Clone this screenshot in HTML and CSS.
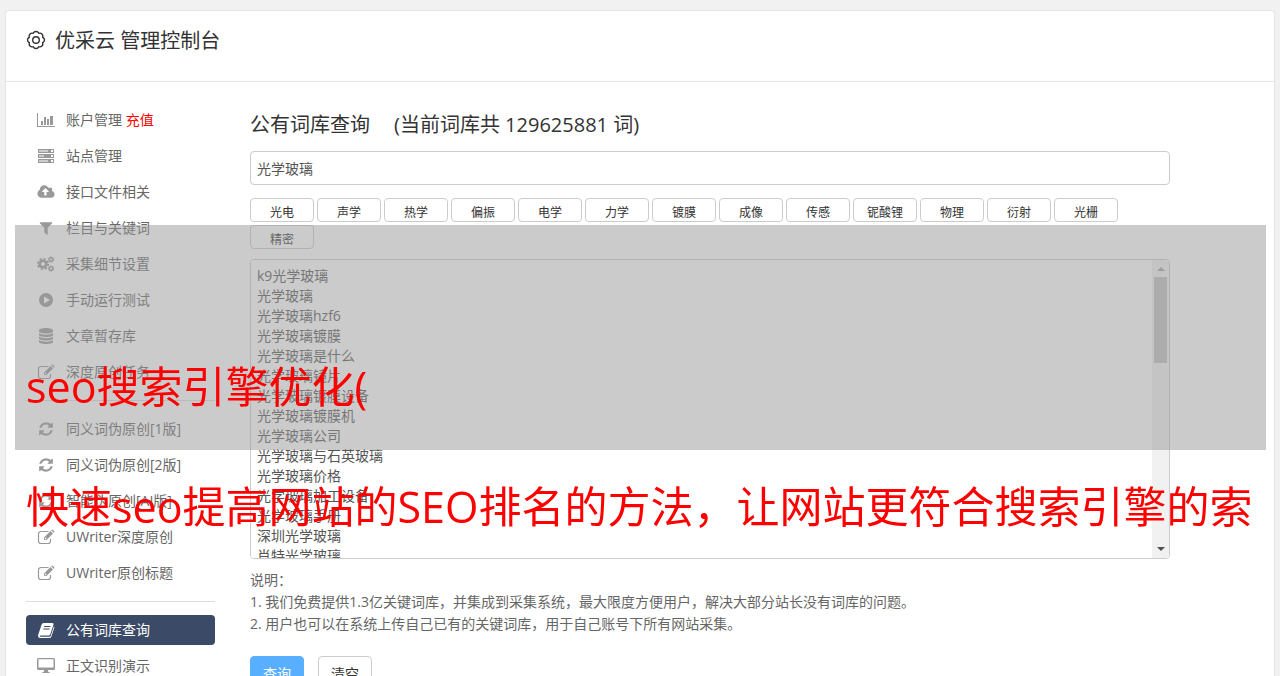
FILE: index.html
```html
<!DOCTYPE html>
<html lang="zh-CN">
<head>
  <meta charset="UTF-8" />
  <meta name="viewport" content="width=device-width,initial-scale=1" />
  <title>优采云 管理控制台</title>
  <link rel="stylesheet" href="styles.css">
</head>
<body>

  <!-- shared icon shapes -->
  <svg class="sprite" aria-hidden="true">
    <symbol id="i-chart" viewBox="0 0 18 16">
      <path d="M0 1h1v13h17v1H0zM4 9h2v4H4zM7 5h2v8H7zM10 7h2v6h-2zM13 4h3v9h-3z"/>
    </symbol>
    <symbol id="i-server" viewBox="0 0 18 16">
      <path fill-rule="evenodd" d="M1 1h16v4H1zM2 2.500v1h9v-1zM14 2v2h2V2zM1 6h16v4H1zM2 7.500v1h5v-1zM14 7v2h2V7zM1 11h16v4H1zM2 12.500v1h9v-1zM14 12v2h2v-2z"/>
    </symbol>
    <symbol id="i-cloud" viewBox="0 0 1920 1792">
      <path fill-rule="evenodd" d="M1920 1152q0 159-112 272t-272 112H448q-185 0-316-132T0 1088q0-130 70-240t188-165q-2-30-2-43 0-212 150-362t362-150q156 0 286 87t188 231q71-62 166-62 106 0 181 75t75 181q0 76-41 138 130 31 214 136t83 238zM1280 864q0-14-9-23L919 489q-9-9-23-9t-23 9L522 840q-10 12-10 24 0 14 9 23t23 9h224v352q0 13 10 22t22 10h192q13 0 22-10t10-22V896h224q13 0 22-10t10-22z"/>
    </symbol>
    <symbol id="i-filter" viewBox="0 0 1792 1792">
      <path d="M1595 295q17 41-14 70l-493 493v742q0 42-39 59-13 5-25 5-27 0-45-19l-256-256q-19-19-19-45V858L211 365q-31-29-14-70 17-39 59-39h1280q42 0 59 39z"/>
    </symbol>
    <symbol id="i-cogs" viewBox="0 0 18 16">
      <circle cx="6" cy="8" r="3.300" fill="none" stroke="currentColor" stroke-width="2.600"/>
      <circle cx="6" cy="8" r="5.200" fill="none" stroke="currentColor" stroke-width="1.800" stroke-dasharray="2.042"/>
      <circle cx="14" cy="3.500" r="1.800" fill="none" stroke="currentColor" stroke-width="1.400"/>
      <circle cx="14" cy="3.500" r="2.800" fill="none" stroke="currentColor" stroke-width="1" stroke-dasharray="1.466"/>
      <circle cx="14" cy="12.500" r="1.800" fill="none" stroke="currentColor" stroke-width="1.400"/>
      <circle cx="14" cy="12.500" r="2.800" fill="none" stroke="currentColor" stroke-width="1" stroke-dasharray="1.466"/>
    </symbol>
    <symbol id="i-play" viewBox="0 0 16 16">
      <path fill-rule="evenodd" d="M8 1a7 7 0 1 1 0 14A7 7 0 0 1 8 1zM6 4.500v7l6-3.500z"/>
    </symbol>
    <symbol id="i-database" viewBox="0 0 16 16">
      <path d="M8 0c4 0 7 1 7 2.300v1C15 4.600 12 5.600 8 5.600S1 4.600 1 3.300v-1C1 1 4 0 8 0zM1 5c1.500 1.200 4 1.700 7 1.700S13.500 6.200 15 5v1.800c0 1.300-3 2.300-7 2.300S1 8.100 1 6.800zM1 8.500c1.500 1.200 4 1.700 7 1.700s5.500-.5 7-1.700v1.800c0 1.300-3 2.300-7 2.300s-7-1-7-2.300zM1 12c1.500 1.200 4 1.700 7 1.700s5.500-.5 7-1.700v1.700C15 15 12 16 8 16s-7-1-7-2.300z"/>
    </symbol>
    <symbol id="i-edit" viewBox="0 0 18 16">
      <path d="M11.500 2.500H4A2.500 2.500 0 0 0 1.500 5v7A2.500 2.500 0 0 0 4 14.500h7a2.500 2.500 0 0 0 2.500-2.500v-2" fill="none" stroke="currentColor" stroke-width="1.200"/>
      <path fill-rule="evenodd" d="M13.500 2 16 4.500 9.500 11H7V8.500zM7.800 9v1.200H9l.6-.6-1.200-1.200zM14.200 1.300l.6-.6q.5-.4 1 0l1.500 1.500q.4.500 0 1l-.6.600z"/>
    </symbol>
    <symbol id="i-refresh" viewBox="0 0 1536 1792">
      <path d="M1511 1056q0 5-1 7-64 268-268 434t-478 167q-146 0-282-55t-243-157l-129 129q-19 19-45 19t-45-19-19-45v-448q0-26 19-45t45-19h448q26 0 45 19t19 45-19 45l-137 137q71 66 161 102t187 36q134 0 250-65t186-179q11-17 53-117 8-23 30-23h192q13 0 22 10t9 22zM1536 256v448q0 26-19 45t-45 19h-448q-26 0-45-19t-19-45 19-45l138-138q-148-137-349-137-134 0-250 65T332 628q-11 17-53 117-8 23-30 23H50q-13 0-22-10t-10-22v-7q65-268 270-434t480-167q146 0 284 56t245 156l130-129q19-19 45-19t45 19 19 45z"/>
    </symbol>
    <symbol id="i-book" viewBox="0 0 18 16">
      <path fill-rule="evenodd" d="M6.500 1h9q1.400.1 1 1.600l-3.200 9.600q-.4 1.300-1.800 1.300H3.300q-.9 0-.7.600.3.600 1.200.6h8.700q.9 0 1.200-.8l3.200-9.600q.7.500.4 1.500l-3 9q-.5 1.200-1.800 1.200H3.400Q1 16 1 13.500L4.600 2.600Q5.200 1 6.500 1zM7.300 4l-.3 1h6.300l.3-1zM6.500 6.500l-.3 1h6.200l.3-1z"/>
    </symbol>
    <symbol id="i-desktop" viewBox="0 0 18 16">
      <path fill-rule="evenodd" d="M1.500 0h15Q18 0 18 1.500v9q0 1.500-1.500 1.500H11v1.500q2 .5 2 1.500H5q0-1 2-1.500V12H1.500Q0 12 0 10.500v-9Q0 0 1.500 0zM1.500 1.200v8.300h15V1.200z"/>
    </symbol>
    <symbol id="i-gear" viewBox="0 0 20 20">
      <path d="M16.650 12.760A3 3 0 0 1 12.760 16.650 3 3 0 0 1 7.240 16.650 3 3 0 0 1 3.350 12.760 3 3 0 0 1 3.350 7.240 3 3 0 0 1 7.240 3.350 3 3 0 0 1 12.760 3.350 3 3 0 0 1 16.650 7.240 3 3 0 0 1 16.650 12.760z" fill="none" stroke="currentColor" stroke-width="1.400" stroke-linejoin="round"/>
      <circle cx="10" cy="10" r="3.300" fill="none" stroke="currentColor" stroke-width="1.400"/>
    </symbol>
  </svg>

  <div class="panel">
    <header class="panel-header">
      <svg class="gear"><use href="#i-gear"/></svg>
      <h1>优采云 管理控制台</h1>
    </header>

    <div class="container">
      <!-- SIDE MENU -->
      <nav class="menu">
        <a href="#"><svg class="icon"><use href="#i-chart"/></svg><span>账户管理 <em>充值</em></span></a>
        <a href="#"><svg class="icon"><use href="#i-server"/></svg>站点管理</a>
        <a href="#"><svg class="icon"><use href="#i-cloud"/></svg>接口文件相关</a>
        <a href="#"><svg class="icon"><use href="#i-filter"/></svg>栏目与关键词</a>
        <a href="#"><svg class="icon"><use href="#i-cogs"/></svg>采集细节设置</a>
        <a href="#"><svg class="icon"><use href="#i-play"/></svg>手动运行测试</a>
        <a href="#"><svg class="icon"><use href="#i-database"/></svg>文章暂存库</a>
        <a href="#"><svg class="icon"><use href="#i-edit"/></svg>深度原创任务</a>
        <hr>
        <a href="#"><svg class="icon"><use href="#i-refresh"/></svg>同义词伪原创[1版]</a>
        <a href="#"><svg class="icon"><use href="#i-refresh"/></svg>同义词伪原创[2版]</a>
        <a href="#"><svg class="icon"><use href="#i-refresh"/></svg>智能伪原创[AI版]</a>
        <a href="#"><svg class="icon"><use href="#i-edit"/></svg>UWriter深度原创</a>
        <a href="#"><svg class="icon"><use href="#i-edit"/></svg>UWriter原创标题</a>
        <hr>
        <a href="#" class="active"><svg class="icon"><use href="#i-book"/></svg>公有词库查询</a>
        <a href="#"><svg class="icon"><use href="#i-desktop"/></svg>正文识别演示</a>
      </nav>

      <!-- WORD QUERY -->
      <main class="content">
        <h2><label for="word">公有词库查询</label><span>(当前词库共 129625881 词)</span></h2>
        <input type="text" id="word" class="word" value="光学玻璃">

        <div class="tags">
          <button type="button">光电</button>
          <button type="button">声学</button>
          <button type="button">热学</button>
          <button type="button">偏振</button>
          <button type="button">电学</button>
          <button type="button">力学</button>
          <button type="button">镀膜</button>
          <button type="button">成像</button>
          <button type="button">传感</button>
          <button type="button">铌酸锂</button>
          <button type="button">物理</button>
          <button type="button">衍射</button>
          <button type="button">光栅</button>
          <button type="button">精密</button>
        </div>

        <div class="words-box">
          <textarea class="words" id="words" aria-label="关键词">k9光学玻璃
光学玻璃
光学玻璃hzf6
光学玻璃镀膜
光学玻璃是什么
光学玻璃镜片
光学玻璃镀膜设备
光学玻璃镀膜机
光学玻璃公司
光学玻璃与石英玻璃
光学玻璃价格
光学玻璃加工设备
光学玻璃手册
深圳光学玻璃
肖特光学玻璃</textarea>
          <div class="scrollbar" aria-hidden="true">
            <svg class="up" viewBox="0 0 8 4"><path d="M0 4l4-4 4 4z"/></svg>
            <div class="thumb"></div>
            <svg class="down" viewBox="0 0 8 4"><path d="M0 0l4 4 4-4z"/></svg>
          </div>
        </div>

        <div class="notes">
          <p>说明：</p>
          <p>1. 我们免费提供1.3亿关键词库，并集成到采集系统，最大限度方便用户，解决大部分站长没有词库的问题。</p>
          <p>2. 用户也可以在系统上传自己已有的关键词库，用于自己账号下所有网站采集。</p>
        </div>

        <div class="actions">
          <button type="submit" class="primary">查询</button>
          <button type="reset">清空</button>
        </div>
      </main>
    </div>
  </div>

  <!-- caption over the page -->
  <div class="caption">
    <p class="band">seo搜索引擎优化(</p>
    <p>快速seo提高网站的SEO排名的方法，让网站更符合搜索引擎的索</p>
  </div>

</body>
</html>
```
FILE: styles.css
```css
* { box-sizing: border-box; }
body { margin: 0; padding: 10px 5px 0; height: 100vh; overflow: hidden; position: relative; background: #f1f1f1; color: #666; font: 14px/20px "Open Sans", "Noto Sans CJK SC", sans-serif; }
h1, h2, p { margin: 0; font-weight: normal; }
a { color: inherit; text-decoration: none; }
button, input, textarea { font: inherit; }
.sprite { display: none; }

.panel { background: #fff; border: 1px solid #e5e5e5; border-radius: 4px; min-height: 100vh; }
.panel-header { display: flex; align-items: center; gap: 9px; padding: 14px 20px 24px; border-bottom: 1px solid #e5e5e5; color: #333; }
.panel-header h1 { font-size: 20px; line-height: 32px; }
.gear { width: 20px; height: 20px; margin-bottom: 2px; }
.container { display: flex; gap: 35px; padding: 23px 20px; }

/* side menu */
.menu { flex: 0 0 189px; }
.menu a { display: flex; align-items: center; gap: 11px; height: 30px; margin-bottom: 6px; padding-left: 11px; border-radius: 4px; }
.menu em { font-style: normal; color: #f00; }
.menu hr { margin: 13px 0; border: 0; border-top: 1px solid #ddd; }
.menu a:has(+ hr) { margin-bottom: 0; }
.menu .active { background: #3b4a66; color: #fff; }
.icon { width: 18px; height: 16px; fill: currentColor; color: #999; }
.active .icon { color: #fff; }

/* query form */
.content { flex: 1; max-width: 920px; }
.content h2 { display: flex; gap: 24px; font-size: 20px; line-height: 40px; margin-bottom: 6px; color: #333; }
.word { display: block; width: 100%; height: 34px; padding: 0 6px; border: 1px solid #ccc; border-radius: 4px; color: #555; }
.tags { display: flex; flex-wrap: wrap; gap: 3px; margin: 13px 0 10px; }
.tags button { width: 64px; height: 24px; padding: 6px 0 0; border: 1px solid #ccc; border-radius: 4px; background: #fff; color: #333; font-size: 12px; line-height: 16px; }
.words-box { display: flex; height: 300px; border: 1px solid #ccc; border-radius: 4px; overflow: hidden; }
.words { flex: 1; padding: 6px; border: 0; background: #fff; color: #555; resize: none; outline: 0; }
.scrollbar { display: flex; flex-direction: column; align-items: center; width: 17px; padding: 7px 0; background: #f1f1f1; }
.scrollbar svg { width: 8px; height: 4px; }
.scrollbar .up { fill: #a3a3a3; }
.scrollbar .down { margin-top: auto; fill: #505050; }
.thumb { width: 13px; height: 86px; margin-top: 6px; background: #c1c1c1; }
.notes { margin: 10px 0 21px; line-height: 22px; }
.actions { display: flex; gap: 14px; }
.actions button { width: 54px; height: 36px; padding: 0; border: 1px solid #ccc; border-radius: 4px; background: #fff; color: #333; }
.actions .primary { border-color: #59afff; background: #59afff; color: #fff; }

/* caption */
.caption { position: absolute; top: 225px; left: 15px; right: 14px; color: #f00; font-size: 43px; line-height: 114px; white-space: nowrap; pointer-events: none; }
.caption p { padding-left: 11px; }
.caption .band { padding-top: 105px; height: 225px; background: rgba(151, 151, 151, .5); }
```
